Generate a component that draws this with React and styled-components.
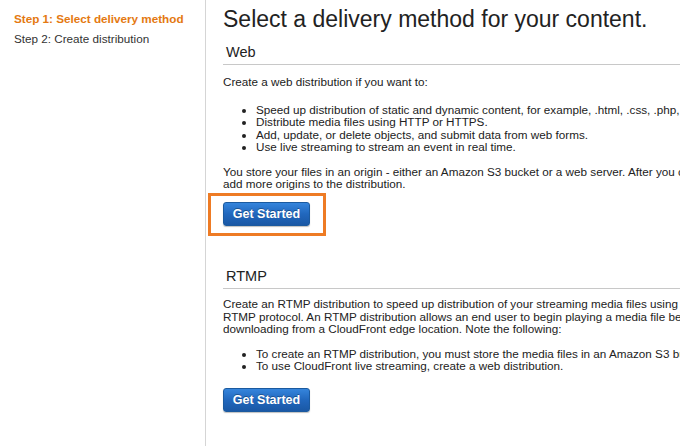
import styled, { createGlobalStyle } from "styled-components";

const GlobalStyle = createGlobalStyle`
  html, body {
    margin: 0;
    padding: 0;
    background: #fff;
    overflow: hidden;
  }
  body {
    font-family: "Liberation Sans", Arial, sans-serif;
    color: #222;
  }
`;

const Page = styled.div`
  display: flex;
  min-height: 100vh;
`;

const Sidebar = styled.nav`
  flex: 0 0 206px;
  border-right: 1px solid #d5d5d5;
  padding: 9px 0 0 14px;
  box-sizing: border-box;
`;

const Step = styled.div`
  font-size: 11.7px;
  line-height: 20px;
  font-weight: ${(p) => (p.$active ? "bold" : "normal")};
  color: ${(p) => (p.$active ? "#e47911" : "#333")};
`;

const Main = styled.main`
  flex: 1;
  min-width: 0;
  padding: 5px 0 0 17px;
`;

const Title = styled.h1`
  margin: 0 0 10px;
  font-size: 23px;
  line-height: 28px;
  font-weight: normal;
  color: #222;
  white-space: nowrap;
`;

const Section = styled.section`
  margin-bottom: ${(p) => p.$gap || 0}px;
`;

const SectionHeading = styled.h2`
  margin: 0;
  padding: 0 0 3px 3px;
  font-size: 14.5px;
  line-height: 18px;
  font-weight: normal;
  color: #222;
  border-bottom: 1px solid #c8c8c8;
  width: 900px;
`;

const Text = styled.p`
  margin: ${(p) => p.$top}px 0 ${(p) => p.$bottom}px;
  font-size: 11.7px;
  line-height: 12.2px;
  white-space: nowrap;
`;

const List = styled.ul`
  margin: ${(p) => p.$top}px 0 0;
  padding-left: 33px;
  font-size: 11.7px;
  line-height: 12.2px;
  white-space: nowrap;
`;

const Highlight = styled.div`
  display: inline-block;
  margin-left: -15px;
  padding: 6px 13px 7px 12px;
  border: 3px solid #ee7b24;
`;

const Button = styled.button`
  display: block;
  margin-top: ${(p) => p.$top || 0}px;
  width: 87px;
  height: 24px;
  padding: 0;
  border: 1px solid #1b5a9f;
  border-radius: 3px;
  background: linear-gradient(#3585dc, #2167bd 50%, #1a58a5);
  box-shadow: 0 1px 1px rgba(0, 0, 0, 0.25);
  color: #fff;
  font-family: "Liberation Sans", Arial, sans-serif;
  font-size: 12.5px;
  font-weight: bold;
  text-shadow: 0 -1px 0 rgba(0, 0, 0, 0.3);
  cursor: pointer;
`;

export default function App() {
  return (
    <>
      <GlobalStyle />
      <Page>
        <Sidebar>
          <Step $active>Step 1: Select delivery method</Step>
          <Step>Step 2: Create distribution</Step>
        </Sidebar>
        <Main>
          <Title>Select a delivery method for your content.</Title>
          <Section $gap={31}>
            <SectionHeading>Web</SectionHeading>
            <Text $top={11} $bottom={0}>
              Create a web distribution if you want to:
            </Text>
            <List $top={16}>
              <li>
                Speed up distribution of static and dynamic content, for example, .html, .css,
                .php, and graphics files.
              </li>
              <li>Distribute media files using HTTP or HTTPS.</li>
              <li>Add, update, or delete objects, and submit data from web forms.</li>
              <li>Use live streaming to stream an event in real time.</li>
            </List>
            <Text $top={13} $bottom={3}>
              You store your files in an origin - either an Amazon S3 bucket or a web server.
              After you create the distribution, you can
              <br />
              add more origins to the distribution.
            </Text>
            <Highlight>
              <Button>Get Started</Button>
            </Highlight>
          </Section>
          <Section>
            <SectionHeading>RTMP</SectionHeading>
            <Text $top={9} $bottom={0}>
              Create an RTMP distribution to speed up distribution of your streaming media files
              using Adobe Flash Media Server's
              <br />
              RTMP protocol. An RTMP distribution allows an end user to begin playing a media
              file before the file has finished
              <br />
              downloading from a CloudFront edge location. Note the following:
            </Text>
            <List $top={13}>
              <li>
                To create an RTMP distribution, you must store the media files in an Amazon S3
                bucket.
              </li>
              <li>To use CloudFront live streaming, create a web distribution.</li>
            </List>
            <Button $top={16}>Get Started</Button>
          </Section>
        </Main>
      </Page>
    </>
  );
}
